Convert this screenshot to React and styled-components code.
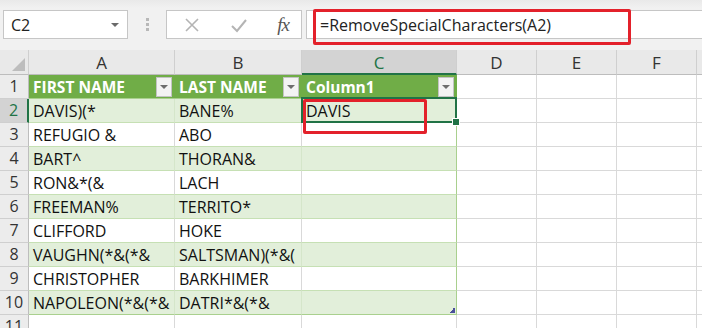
import styled, { createGlobalStyle } from "styled-components"

const GlobalStyle = createGlobalStyle`
    body {
        margin: 0;
        background: #ffffff;
        font-family: "Open Sans", "Noto Sans", sans-serif;
        overflow: hidden;
    }
`

const columns = [
    { key: "A", width: 146 },
    { key: "B", width: 127 },
    { key: "C", width: 155 },
    { key: "D", width: 80 },
    { key: "E", width: 80 },
    { key: "F", width: 80 },
    { key: "", width: 80 },
]

const rows = [
    ["DAVIS)(*", "BANE%", "DAVIS"],
    ["REFUGIO &", "ABO", ""],
    ["BART^", "THORAN&", ""],
    ["RON&*(&", "LACH", ""],
    ["FREEMAN%", "TERRITO*", ""],
    ["CLIFFORD", "HOKE", ""],
    ["VAUGHN(*&(*&", "SALTSMAN)(*&(", ""],
    ["CHRISTOPHER", "BARKHIMER", ""],
    ["NAPOLEON(*&(*&", "DATRI*&(*&", ""],
]

const headers = ["FIRST NAME", "LAST NAME", "Column1"]

export default function App() {
    return (
        <Page>
            <GlobalStyle />
            <Toolbar>
                <NameBox>
                    <span>C2</span>
                    <Caret />
                </NameBox>
                <Grip>
                    <i /><i /><i />
                </Grip>
                <FuncBox>
                    <svg width="16" height="16" viewBox="0 0 16 16">
                        <path d="M2 2 L14 14 M14 2 L2 14" stroke="#b4b4b4" strokeWidth="1.6" fill="none" />
                    </svg>
                    <svg width="18" height="16" viewBox="0 0 18 16">
                        <path d="M2 9 L7 14 L16 3" stroke="#b4b4b4" strokeWidth="2" fill="none" />
                    </svg>
                    <Fx>fx</Fx>
                </FuncBox>
                <FormulaBox>=RemoveSpecialCharacters(A2)</FormulaBox>
                <Annotation />
            </Toolbar>

            <Sheet>
                <Corner />
                {columns.map((c, i) => (
                    <ColHeader key={i} $selected={c.key === "C"}>{c.key}</ColHeader>
                ))}

                <RowHeader>1</RowHeader>
                {columns.map((c, i) => i < 3 ? (
                    <TableHead key={i}>
                        <span>{headers[i]}</span>
                        <FilterButton />
                    </TableHead>
                ) : <Cell key={i} />)}

                {rows.map((r, ri) => {
                    const num = ri + 2
                    const band = num % 2 === 0
                    return [
                        <RowHeader key={"h" + num} $selected={num === 2}>{num}</RowHeader>,
                        ...columns.map((c, ci) => ci < 3 ? (
                            <Cell key={num + "-" + ci} $band={band} $table $edge={ci === 2} $last={num === 10}>
                                {r[ci]}
                                {num === 2 && ci === 2 && <Selection><FillHandle /></Selection>}
                                {num === 2 && ci === 2 && <CellAnnotation />}
                                {num === 10 && ci === 2 && <ResizeHandle />}
                            </Cell>
                        ) : <Cell key={num + "-" + ci} />)
                    ]
                })}

                <RowHeader>11</RowHeader>
                {columns.map((c, i) => <Cell key={"11-" + i} />)}
            </Sheet>
        </Page>
    )
}

const Page = styled.div`
    width: 702px;
    height: 328px;
    overflow: hidden;
`

const Toolbar = styled.div`
    position: relative;
    height: 50px;
    box-sizing: border-box;
    padding: 10px 0 0 3px;
    display: flex;
    align-items: flex-start;
    background: linear-gradient(#e9e9e9 0px, #f1f1f1 8px, #f1f1f1 100%);
`

const NameBox = styled.div`
    width: 125px;
    height: 29px;
    box-sizing: border-box;
    border: 1px solid #c6c6c6;
    background: #ffffff;
    display: flex;
    align-items: center;
    justify-content: space-between;
    padding: 0 8px 0 7px;
    font-size: 16px;
    color: #222222;
`

const Caret = styled.div`
    width: 0;
    height: 0;
    border-left: 4px solid transparent;
    border-right: 4px solid transparent;
    border-top: 4px solid #6a6a6a;
`

const Grip = styled.div`
    width: 38px;
    height: 29px;
    display: flex;
    flex-direction: column;
    align-items: center;
    justify-content: center;
    gap: 2px;
    i {
        display: block;
        width: 3px;
        height: 3px;
        background: #b8b8b8;
    }
`

const FuncBox = styled.div`
    width: 136px;
    height: 29px;
    box-sizing: border-box;
    border: 1px solid #c6c6c6;
    background: #ffffff;
    display: flex;
    align-items: center;
    justify-content: space-between;
    padding: 0 12px 0 17px;
`

const Fx = styled.span`
    font-family: "Liberation Serif", "DejaVu Serif", serif;
    font-style: italic;
    font-size: 19px;
    color: #555555;
    letter-spacing: -1px;
`

const FormulaBox = styled.div`
    flex: 1;
    margin-left: 4px;
    height: 29px;
    box-sizing: border-box;
    border: 1px solid #c6c6c6;
    border-right: none;
    background: #ffffff;
    display: flex;
    align-items: center;
    padding-left: 13px;
    font-size: 16px;
    color: #222222;
`

const Annotation = styled.div`
    position: absolute;
    left: 313px;
    top: 9px;
    width: 318px;
    height: 36px;
    box-sizing: border-box;
    border: 3px solid #e3212b;
    border-radius: 2px;
`

const Sheet = styled.div`
    display: grid;
    grid-template-columns: 29px 146px 127px 155px 80px 80px 80px 80px;
    grid-template-rows: 25px repeat(11, 24px);
`

const Corner = styled.div`
    position: relative;
    background: #e9e9e9;
    border-right: 1px solid #cfcfcf;
    border-bottom: 1px solid #bdbdbd;
    box-sizing: border-box;
    &::after {
        content: "";
        position: absolute;
        right: 3px;
        bottom: 3px;
        width: 0;
        height: 0;
        border-left: 13px solid transparent;
        border-bottom: 13px solid #bdbdbd;
    }
`

const ColHeader = styled.div`
    box-sizing: border-box;
    background: ${p => p.$selected ? "#d3d3d3" : "#e9e9e9"};
    border-right: 1px solid #cfcfcf;
    border-bottom: ${p => p.$selected ? "2px solid #217346" : "1px solid #bdbdbd"};
    color: ${p => p.$selected ? "#217346" : "#333333"};
    display: flex;
    align-items: center;
    justify-content: center;
    font-size: 17px;
    padding-top: 1px;
`

const RowHeader = styled.div`
    box-sizing: border-box;
    background: ${p => p.$selected ? "#d3d3d3" : "#ececec"};
    border-right: ${p => p.$selected ? "2px solid #217346" : "1px solid #bdbdbd"};
    border-bottom: 1px solid #cfcfcf;
    color: ${p => p.$selected ? "#217346" : "#333333"};
    display: flex;
    align-items: flex-start;
    justify-content: center;
    font-size: 16px;
    line-height: 23px;
    overflow: hidden;
`

const TableHead = styled.div`
    box-sizing: border-box;
    background: #70ad47;
    border-bottom: 1px solid #a9d08e;
    display: flex;
    align-items: center;
    justify-content: space-between;
    padding: 0 3px 0 4px;
    color: #ffffff;
    font-weight: 700;
    font-size: 15.5px;
`

const FilterButton = styled.div`
    width: 16px;
    height: 20px;
    box-sizing: border-box;
    background: #f3f3f3;
    border: 1px solid #c3c3c3;
    display: flex;
    align-items: center;
    justify-content: center;
    &::after {
        content: "";
        width: 0;
        height: 0;
        border-left: 4px solid transparent;
        border-right: 4px solid transparent;
        border-top: 4px solid #6d6d6d;
    }
`

const Cell = styled.div`
    position: relative;
    box-sizing: border-box;
    background: ${p => p.$band ? "#e2efda" : "#ffffff"};
    border-right: 1px solid ${p => p.$edge ? "#a9d08e" : p.$band ? "#d5e6ca" : "#d9d9d9"};
    border-bottom: 1px solid ${p => p.$table ? (p.$last ? "#a9d08e" : "#c6e0b4") : "#d9d9d9"};
    display: flex;
    align-items: center;
    padding-left: 4px;
    font-size: 16px;
    color: #111111;
    white-space: nowrap;
`

const Selection = styled.div`
    position: absolute;
    z-index: 2;
    left: -1px;
    top: -2px;
    right: -1px;
    bottom: -1px;
    border: 2px solid #217346;
`

const FillHandle = styled.div`
    position: absolute;
    right: -5px;
    bottom: -5px;
    width: 6px;
    height: 6px;
    background: #217346;
    border: 1px solid #ffffff;
`

const CellAnnotation = styled.div`
    position: absolute;
    z-index: 3;
    left: 1px;
    top: 0;
    width: 124px;
    height: 35px;
    box-sizing: border-box;
    border: 3px solid #e3212b;
    border-radius: 2px;
`

const ResizeHandle = styled.div`
    position: absolute;
    right: 1px;
    bottom: 1px;
    width: 6px;
    height: 6px;
    background: linear-gradient(to bottom right, transparent 50%, #4a4f9a 50%);
`
